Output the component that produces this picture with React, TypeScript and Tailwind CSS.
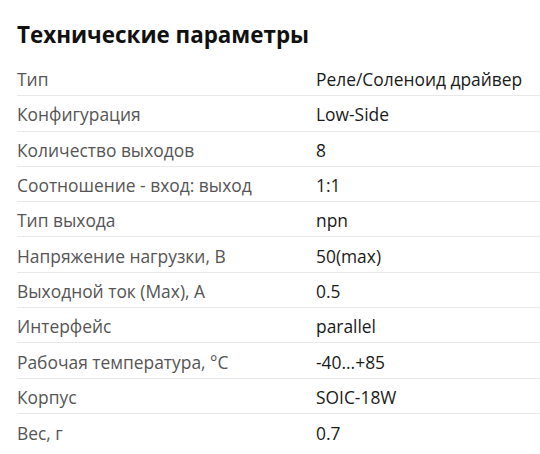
import React from "react";

const rows: [string, string][] = [
  ["Тип", "Реле/Соленоид драйвер"],
  ["Конфигурация", "Low-Side"],
  ["Количество выходов", "8"],
  ["Соотношение - вход: выход", "1:1"],
  ["Тип выхода", "npn"],
  ["Напряжение нагрузки, В", "50(max)"],
  ["Выходной ток (Max), А", "0.5"],
  ["Интерфейс", "parallel"],
  ["Рабочая температура, °C", "-40...+85"],
  ["Корпус", "SOIC-18W"],
  ["Вес, г", "0.7"],
];

export default function App() {
  return (
    <div
      className="w-[540px] h-[454px] bg-white pl-[17px] pt-[20px] overflow-hidden"
      style={{ fontFamily: '"Open Sans", sans-serif' }}
    >
      <h2 className="text-[22.4px] font-bold text-[#111] leading-[30px] mb-[11px]">
        Технические параметры
      </h2>
      <div className="flex flex-col">
        {rows.map(([k, v], i) => (
          <div
            key={k}
            className={`flex items-center h-[35.3px] text-[17.4px] leading-[24px] pt-[2px] ${
              i < rows.length - 1 ? "border-b border-[#e8e8e8]" : ""
            }`}
          >
            <div className="w-[299px] text-[#555]">{k}</div>
            <div className="text-[#1a1a1a]">{v}</div>
          </div>
        ))}
      </div>
    </div>
  );
}
